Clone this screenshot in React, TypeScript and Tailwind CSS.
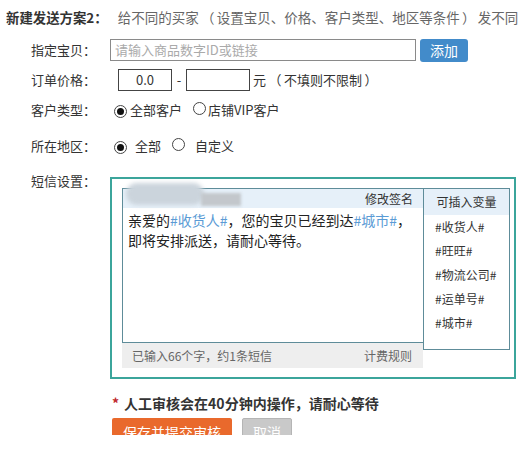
import React from "react";

function Radio({ checked }: { checked?: boolean }) {
  return (
    <span className="inline-flex items-center justify-center w-[13px] h-[13px] rounded-full border border-[#444] bg-white shrink-0">
      {checked && <span className="w-[7px] h-[7px] rounded-full bg-[#111]" />}
    </span>
  );
}

const Var = ({ children }: { children: React.ReactNode }) => (
  <span className="text-[#5b9bd5]">{children}</span>
);

// full-width punctuation with fixed advance
const P = ({ c }: { c: string }) => (
  <span className="inline-block w-[1em] text-center">{c}</span>
);
const Paren = ({ c }: { c: string }) => (
  <span className="inline-block w-[18px] text-center">{c}</span>
);

export default function App() {
  const vars = ["#收货人#", "#旺旺#", "#物流公司#", "#运单号#", "#城市#"];
  return (
    <div
      lang="zh-CN"
      className="w-[518px] h-[457px] bg-white font-['Noto_Sans_CJK_SC',sans-serif] text-[#333] text-[13px]"
    >
      <div className="h-[435px] overflow-hidden">
        {/* title */}
        <div className="h-[34px] flex items-center pl-[6px] whitespace-nowrap overflow-hidden">
          <span className="font-bold text-[13.4px]">新建发送方案2：</span>
          <span className="ml-[10px] text-[#666] text-[13.5px]">
            给不同的买家<Paren c="（" />设置宝贝<P c="、" />价格<P c="、" />客户类型<P c="、" />地区等条件<Paren c="）" />发不同
          </span>
        </div>

        {/* item */}
        <div className="mt-[5px] h-[22px] flex items-center">
          <div className="w-[110px] pl-[31px]">指定宝贝：</div>
          <div className="w-[306px] h-[22px] border border-[#8a8a8a] flex items-center pl-[4px] text-[#aaa]">
            请输入商品数字ID或链接
          </div>
          <button className="ml-[4px] w-[48px] h-[23px] rounded-[3px] bg-[#428bca] text-white text-[14px] flex items-center justify-center">
            添加
          </button>
        </div>

        {/* price */}
        <div className="mt-[8px] h-[22px] flex items-center">
          <div className="w-[110px] pl-[31px]">订单价格：</div>
          <div className="ml-[8px] w-[54px] h-[22px] border border-[#444] flex items-center justify-center">
            0.0
          </div>
          <span className="w-[14px] text-center">-</span>
          <div className="w-[64px] h-[22px] border border-[#444]" />
          <span className="ml-[3px] whitespace-nowrap">
            元<Paren c="（" />不填则不限制<Paren c="）" />
          </span>
        </div>

        {/* customer type */}
        <div className="mt-[8px] h-[22px] flex items-center">
          <div className="w-[110px] pl-[31px]">客户类型：</div>
          <span className="ml-[4px]"><Radio checked /></span>
          <span className="ml-[3px]">全部客户</span>
          <span className="ml-[11px]"><Radio /></span>
          <span className="ml-[2px]">店铺VIP客户</span>
        </div>

        {/* region */}
        <div className="mt-[14px] h-[22px] flex items-center">
          <div className="w-[110px] pl-[31px]">所在地区：</div>
          <span className="ml-[4px]"><Radio checked /></span>
          <span className="ml-[8px]">全部</span>
          <span className="ml-[11px]"><Radio /></span>
          <span className="ml-[10px]">自定义</span>
        </div>

        {/* sms */}
        <div className="mt-[15px] flex items-start">
          <div className="w-[110px] pl-[31px] leading-[18px]">短信设置：</div>
          <div className="mt-[5px] w-[406px] h-[202px] border-2 border-[#3ba59b] pt-[9px] pl-[10px] flex items-start">
            <div className="w-[301px]">
              <div className="h-[155px] border-l border-t border-b border-[#5e8c99] bg-white">
                <div className="relative h-[19px] bg-[#e6f0f9] flex items-center justify-end pr-[10px] text-[12px]">
                  <div className="absolute left-[3px] -top-[6px] w-[78px] h-[22px] rounded-full bg-[#cbd4dc] blur-[2px]" />
                  <div className="absolute left-[78px] top-[4px] w-[40px] h-[13px] bg-[#c3c7cc] blur-[1.5px]" />
                  <span>修改签名</span>
                </div>
                <div className="pl-[5px] pt-[2px] leading-[20px] text-[14px] text-[#222]">
                  <div>
                    亲爱的<Var>#收货人#</Var>，您的宝贝已经到达<Var>#城市#</Var>，
                  </div>
                  <div>即将安排派送，请耐心等待。</div>
                </div>
              </div>
              <div className="h-[25px] bg-[#eeeeee] flex items-center justify-between pl-[10px] pr-[11px] text-[12px] text-[#666]">
                <span>已输入66个字，约1条短信</span>
                <span>计费规则</span>
              </div>
            </div>
            <div className="w-[87px] h-[162px] border border-[#5e8c99] bg-white text-[12px]">
              <div className="h-[26px] bg-[#e6f0f9] flex items-center justify-center">
                可插入变量
              </div>
              <div className="pl-[11px] leading-[24px]">
                {vars.map((v) => (
                  <div key={v}>{v}</div>
                ))}
              </div>
            </div>
          </div>
        </div>

        {/* notice */}
        <div className="mt-[14px] pl-[112px] leading-[20px] text-[14px] font-bold flex items-center">
          <span className="text-[#c0282d]">*</span>
          <span className="ml-[5px] text-[#333]">人工审核会在40分钟内操作，请耐心等待</span>
        </div>
        <div className="mt-[5px] pl-[112px] flex items-start">
          <button className="w-[120px] h-[28px] bg-[#e9692c] text-white text-[14px] rounded-[2px]">
            保存并提交审核
          </button>
          <button className="ml-[10px] w-[50px] h-[28px] bg-[#c9c9c9] border border-[#b5b5b5] text-white text-[14px] rounded-[2px]">
            取消
          </button>
        </div>
      </div>
    </div>
  );
}
